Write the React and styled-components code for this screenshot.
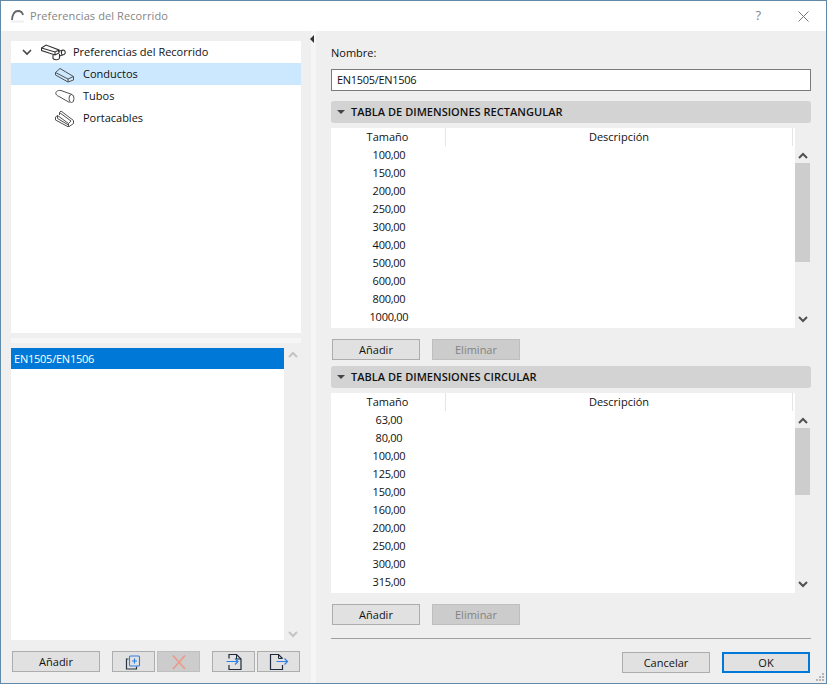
import React from "react";
import styled, { createGlobalStyle } from "styled-components";

const Global = createGlobalStyle`
  html, body { margin: 0; padding: 0; background: #efefef; }
  * { box-sizing: border-box; }
  body { font-family: "Open Sans", "Noto Sans", "Liberation Sans", sans-serif; font-size: 11px; color: #111; }
`;
const Win = styled.div`
  width: 827px; height: 684px; display: flex; flex-direction: column;
  border: 1px solid #6289a8; background: #efefef; overflow: hidden; position: relative;
`;
const TitleBar = styled.div`
  height: 30px; flex: none; background: #fff; display: flex; align-items: center; padding: 0 17px 0 10px;
`;
const TitleText = styled.span`
  font-size: 11px; color: #858585; margin-left: 5px; flex: 1; letter-spacing: 0.1px; padding-bottom: 2px;
`;
const Help = styled.span`
  font-size: 13px; color: #858585; margin-right: 37px; margin-top: -2px;
`;
const Body = styled.div`
  flex: 1; display: flex; min-height: 0;
`;
const Left = styled.div`
  width: 300px; flex: none; padding: 10px 0 0 10px; display: flex; flex-direction: column;
`;
const Tree = styled.div`
  height: 292px; flex: none; background: #fff; width: 290px;
`;
const TreeRow = styled.div`
  height: 22px; display: flex; align-items: center; padding-left: ${p => p.$indent}px;
  background: ${p => p.$sel ? "#cce8ff" : "transparent"}; font-size: 11px; color: #111;
`;
const TreeLabel = styled.span`
  padding-bottom: 2px;
`;
const TreeIcon = styled.svg`
  width: ${p => p.$w || 21}px; height: 17px; flex: none; margin-right: ${p => p.$gap || 7}px;
  fill: none; stroke: #505050; stroke-width: 1;
`;
const TreeToggle = styled.svg`
  width: 10px; height: 7px; flex: none; margin-right: 9px; fill: none; stroke: #444; stroke-width: 1.6;
`;
const TitleIcon = styled.svg`
  width: 14px; height: 14px; flex: none; fill: none;
`;
const CloseIcon = styled.svg`
  width: 11px; height: 11px; flex: none; fill: none; stroke: #777;
`;
const HSplit = styled.div`
  height: 5px; width: 290px; margin: 5px 0; flex: none; background: #f6f6f6;
`;
const ListWrap = styled.div`
  height: 292px; flex: none; width: 290px; display: flex;
`;
const List = styled.div`
  width: 273px; background: #fff;
`;
const ListSel = styled.div`
  height: 21px; background: #0078d7; color: #fff; padding-left: 3px; display: flex; align-items: center;
  font-size: 11px; letter-spacing: -0.23px;
`;
const ScrollCol = styled.div`
  flex: 1; display: flex; flex-direction: column; align-items: center; justify-content: space-between; padding: 3px 0 2px;
`;
const Chev = styled.svg`
  width: 10px; height: 7px; flex: none; fill: none; stroke: ${p => p.$c || "#505050"}; stroke-width: 2;
`;
const LeftButtons = styled.div`
  display: flex; margin-top: 11px; padding-left: 1px;
`;
const Btn = styled.div`
  height: 21px; width: ${p => p.$w || 88}px; flex: none; margin-left: ${p => p.$ml || 0}px;
  display: flex; align-items: center; justify-content: center;
  background: ${p => p.$off ? "#cccccc" : "#e1e1e1"};
  border: ${p => p.$def ? "2px solid #0078d7" : p.$off ? "1px solid #bfbfbf" : "1px solid #adadad"};
  color: ${p => p.$off ? "#838383" : "#111"}; font-size: 11px;
`;
const VSplit = styled.div`
  width: 5px; flex: none; margin-left: 10px; background: #f6f6f6; position: relative;
`;
const Tri = styled.div`
  position: absolute; left: -1px; top: 4px; width: 0; height: 0;
  border-top: 4px solid transparent; border-bottom: 4px solid transparent; border-right: 4px solid #333;
`;
const Right = styled.div`
  flex: 1; padding: 0 16px 0 15px; display: flex; flex-direction: column;
`;
const NameLabel = styled.div`
  height: 38px; padding-top: 13px; font-size: 11px; line-height: 18px;
`;
const NameInput = styled.div`
  height: 22px; border: 1px solid #7a7a7a; background: #fff; padding: 0 0 2px 5px; display: flex; align-items: center;
  font-size: 11px; letter-spacing: -0.3px;
`;
const SectionHead = styled.div`
  height: 22px; background: #d3d3d3; border-radius: 3px; margin-top: ${p => p.$mt}px; display: flex; align-items: center;
  padding: 0 0 2px 6px; font-size: 11px; font-weight: 600; color: #111; letter-spacing: 0.03px;
`;
const Caret = styled.span`
  width: 0; height: 0; border-left: 4px solid transparent; border-right: 4px solid transparent; border-top: 4px solid #444;
  margin: 2px 6px 0 0;
`;
const Table = styled.div`
  height: 200px; margin-top: 5px; display: flex;
`;
const TableMain = styled.div`
  width: 464px; background: #fff; display: flex; flex-direction: column;
`;
const THead = styled.div`
  height: 18px; display: flex; width: 462px; border-right: 1px solid #e5e5e5; align-items: center;
`;
const ThSize = styled.div`
  width: 115px; height: 18px; text-align: center; line-height: 18px; border-right: 1px solid #e5e5e5; padding-right: 1px;
`;
const ThDesc = styled.div`
  flex: 1; text-align: center; line-height: 18px;
`;
const Row = styled.div`
  height: 18px; width: 116px; text-align: center; line-height: 18px; font-size: 11px; flex: none; letter-spacing: -0.25px;
`;
const TScroll = styled.div`
  width: 16px; flex: none; display: flex; flex-direction: column; align-items: center; padding-top: 24px;
`;
const Thumb = styled.div`
  width: 15px; align-self: flex-start; height: ${p => p.$h}px; background: #cdcdcd; margin-top: 4px;
`;
const DownChev = styled.div`
  margin-top: auto; height: 12px; display: flex; align-items: flex-start;
`;
const BtnRow = styled.div`
  display: flex; margin-top: 11px; padding-left: 1px;
`;
const Divider = styled.div`
  height: 1px; background: #a0a0a0; margin-top: 13px;
`;
const Footer = styled.div`
  display: flex; justify-content: flex-end; margin-top: 13px; margin-right: 1px;
`;
const Grip = styled.svg`
  position: absolute; right: 1px; bottom: 1px; width: 10px; height: 10px; fill: #b5b5b5;
`;

const ChevUp = ({c}) => <Chev $c={c} viewBox="0 0 10 7"><path d="M1 6 L5 2 L9 6"/></Chev>;
const ChevDown = ({c}) => <Chev $c={c} viewBox="0 0 10 7"><path d="M1 1 L5 5 L9 1"/></Chev>;

const DuctIcon = () => (
  <TreeIcon viewBox="0 0 21 17">
    <path d="M0.5 6.5 L5 2.5 L18.5 10.5 L18.5 14 L13 16 L0.5 9 Z M0.5 6.5 L13 13 L18.5 10.5 M13 13 L13 16"/>
  </TreeIcon>
);
const TubeIcon = () => (
  <TreeIcon viewBox="0 0 21 17">
    <path d="M6 2.5 C2.5 2 0 4 1 6 C1.5 7.5 3 8 4 8.5 L14.5 14.5 M6 2.5 L17 6.5"/>
    <ellipse cx="16.5" cy="10.5" rx="2.5" ry="4"/>
  </TreeIcon>
);
const TrayIcon = () => (
  <TreeIcon viewBox="0 0 21 17">
    <path d="M0.5 7 L0.5 10 L13.5 17 L18.5 13.5 L18.5 10.5 L6 1 L4.5 2.5 L16 11 L13.5 13.5 L2.5 5.5 Z M2.5 5.5 L2.5 8.5 L13.5 15 M13.5 13.5 L13.5 17 M4.5 2.5 L4.5 5"/>
  </TreeIcon>
);
const RootIcon = () => (
  <TreeIcon $w={25} $gap={7} viewBox="0 0 25 17">
    <g stroke="#333" strokeWidth="1.1">
      <path d="M0.5 4 L5 1 L18 6 L18 9 L14 11 L0.5 6.5 Z M0.5 4 L14 8 L18 6 M14 8 V11"/>
      <path d="M12 11 V14 C12 16 18 16.5 18.5 14 V10"/>
      <path d="M17 7.5 L22 6 C24.5 6 25 9.5 23 10.5 L18.5 12"/>
      <path d="M21.5 6.2 C20 7 20 10 21.5 11"/>
    </g>
  </TreeIcon>
);

const IconBtnSvg = styled.svg`
  width: 20px; height: 18px; flex: none; fill: none;
`;
const NewIcon = () => (
  <IconBtnSvg viewBox="0 0 20 18">
    <path d="M4.5 6 H2.5 V16 H12.5 V13.5" stroke="#2a3340" strokeWidth="1.2"/>
    <rect x="5.5" y="3" width="10" height="10" rx="1" stroke="#2f7fe0" strokeWidth="1.1"/>
    <path d="M10.5 5.5 V10.5 M8 8 H13" stroke="#2f7fe0" strokeWidth="1.2"/>
  </IconBtnSvg>
);
const DelIcon = () => (
  <IconBtnSvg viewBox="0 0 20 18">
    <path d="M4 2.5 L16 16 M16 2.5 L4 16" stroke="#ec9b8d" strokeWidth="1.8"/>
  </IconBtnSvg>
);
const ImportIcon = () => (
  <IconBtnSvg viewBox="0 0 20 18">
    <path d="M5 5.5 V1.5 H12.5 L17 6 V16.5 H5 V12" stroke="#1f2a3a" strokeWidth="1.2"/>
    <path d="M12.5 1.5 V6 H17" stroke="#1f2a3a" strokeWidth="1"/>
    <path d="M2.5 8.5 H14 M11 5.5 L14 8.5 L11 11.5" stroke="#2f7fe0" strokeWidth="1.2"/>
  </IconBtnSvg>
);
const ExportIcon = () => (
  <IconBtnSvg viewBox="0 0 20 18">
    <path d="M13.5 5.5 L9.5 1.5 H1.5 V16.5 H13.5 V12" stroke="#1f2a3a" strokeWidth="1.2"/>
    <path d="M9.5 1.5 V5.5 H13.5" stroke="#1f2a3a" strokeWidth="1"/>
    <path d="M7.5 8.5 H18.5 M15.5 5.5 L18.5 8.5 L15.5 11.5" stroke="#2f7fe0" strokeWidth="1.2"/>
  </IconBtnSvg>
);

const rect = ["100,00","150,00","200,00","250,00","300,00","400,00","500,00","600,00","800,00","1000,00"];
const circ = ["63,00","80,00","100,00","125,00","150,00","160,00","200,00","250,00","300,00","315,00"];

const DimTable = ({rows, thumb}) => (
  <Table>
    <TableMain>
      <THead><ThSize>Tamaño</ThSize><ThDesc>Descripción</ThDesc></THead>
      {rows.map(r => <Row key={r}>{r}</Row>)}
    </TableMain>
    <TScroll>
      <ChevUp/>
      <Thumb $h={thumb}/>
      <DownChev><ChevDown/></DownChev>
    </TScroll>
  </Table>
);

export default function App() {
  return (
    <Win>
      <Global/>
      <TitleBar>
        <TitleIcon viewBox="0 0 14 14">
          <path d="M0 12.5 H13" stroke="#eeeeee" strokeWidth="2"/>
          <path d="M1 11 C1.5 5 4 2 7 2 C9.5 2 11.5 3.5 12 6" stroke="#666" strokeWidth="1.8"/>
        </TitleIcon>
        <TitleText>Preferencias del Recorrido</TitleText>
        <Help>?</Help>
        <CloseIcon viewBox="0 0 11 11"><path d="M0.5 0.5 L10.5 10.5 M10.5 0.5 L0.5 10.5"/></CloseIcon>
      </TitleBar>
      <Body>
        <Left>
          <Tree>
            <TreeRow $indent={11}>
              <TreeToggle viewBox="0 0 10 7"><path d="M1 1 L5 5 L9 1"/></TreeToggle>
              <RootIcon/><TreeLabel>Preferencias del Recorrido</TreeLabel>
            </TreeRow>
            <TreeRow $indent={44} $sel><DuctIcon/><TreeLabel>Conductos</TreeLabel></TreeRow>
            <TreeRow $indent={44}><TubeIcon/><TreeLabel>Tubos</TreeLabel></TreeRow>
            <TreeRow $indent={44}><TrayIcon/><TreeLabel>Portacables</TreeLabel></TreeRow>
          </Tree>
          <HSplit/>
          <ListWrap>
            <List><ListSel>EN1505/EN1506</ListSel></List>
            <ScrollCol><ChevUp c="#c4c4c4"/><ChevDown c="#c4c4c4"/></ScrollCol>
          </ListWrap>
          <LeftButtons>
            <Btn>Añadir</Btn>
            <Btn $w={43} $ml={12}><NewIcon/></Btn>
            <Btn $w={43} $ml={2} $off><DelIcon/></Btn>
            <Btn $w={43} $ml={12}><ImportIcon/></Btn>
            <Btn $w={43} $ml={2}><ExportIcon/></Btn>
          </LeftButtons>
        </Left>
        <VSplit><Tri/></VSplit>
        <Right>
          <NameLabel>Nombre:</NameLabel>
          <NameInput>EN1505/EN1506</NameInput>
          <SectionHead $mt={10}><Caret/>TABLA DE DIMENSIONES RECTANGULAR</SectionHead>
          <DimTable rows={rect} thumb={99}/>
          <BtnRow><Btn>Añadir</Btn><Btn $ml={12} $off>Eliminar</Btn></BtnRow>
          <SectionHead $mt={6}><Caret/>TABLA DE DIMENSIONES CIRCULAR</SectionHead>
          <DimTable rows={circ} thumb={67}/>
          <BtnRow><Btn>Añadir</Btn><Btn $ml={12} $off>Eliminar</Btn></BtnRow>
          <Divider/>
          <Footer><Btn>Cancelar</Btn><Btn $ml={12} $def>OK</Btn></Footer>
        </Right>
      </Body>
      <Grip viewBox="0 0 10 10"><rect x="7" y="1" width="2" height="2"/><rect x="4" y="4" width="2" height="2"/><rect x="7" y="4" width="2" height="2"/><rect x="1" y="7" width="2" height="2"/><rect x="4" y="7" width="2" height="2"/><rect x="7" y="7" width="2" height="2"/></Grip>
    </Win>
  );
}
